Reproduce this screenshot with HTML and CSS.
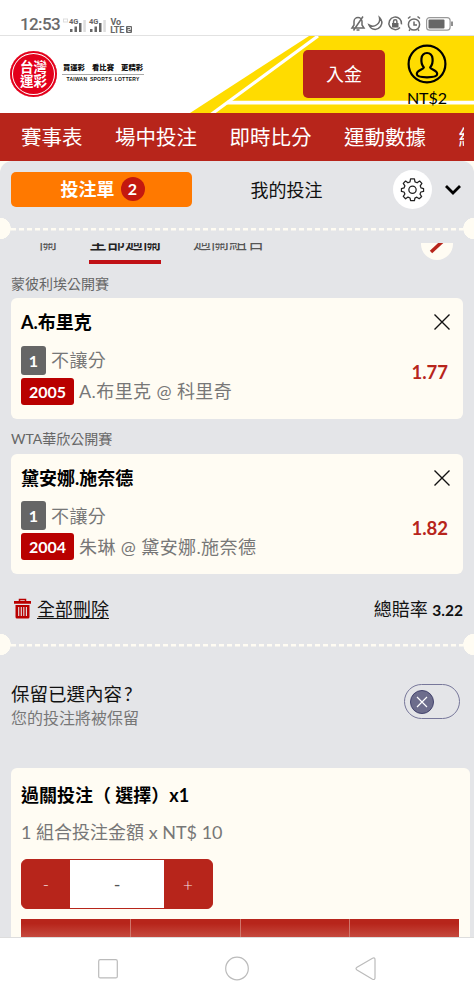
FILE: index.html
```html
<!DOCTYPE html>
<html lang="zh-Hant">
<head>
  <meta charset="UTF-8" />
  <meta name="viewport" content="width=device-width, initial-scale=1.0" />
  <title>台灣運彩 | 投注單</title>
  <link rel="stylesheet" href="styles.css">
</head>
<body>
  <div class="status-bar">
    <span class="clock">12:53</span>
    <svg class="signals" width="80" height="20" viewBox="0 0 80 20">
      <rect x="1.5" y="3" width="4" height="3" fill="none" stroke="#ddd"/>
      <g fill="#666">
        <text x="7" y="8" class="net">4G</text><rect x="8" y="13" width="2.5" height="3"/><rect x="12.5" y="10.5" width="2.5" height="5.5"/><rect x="17" y="7" width="2.5" height="9"/><rect x="21.3" y="4" width="2.5" height="12" fill="#ddd"/>
        <text x="27" y="8" class="net">4G</text><rect x="28" y="13" width="2.5" height="3"/><rect x="32.5" y="10.5" width="2.5" height="5.5"/><rect x="37" y="7" width="2.5" height="9"/><rect x="41.3" y="4" width="2.5" height="12" fill="#ddd"/>
        <text x="48.5" y="8.5" class="volte">Vo</text><text x="48.3" y="16.8" class="volte">LTE</text><rect x="64" y="10" width="6" height="7" rx="1"/><path d="M65.5 11.5h3v2h-2.500v2h2.500" fill="none" stroke="#fff" stroke-width=".8"/>
      </g>
    </svg>
    <svg class="status-icons" width="106" height="18" viewBox="0 0 106 18" fill="none" stroke="#6a6a6a" stroke-width="1.5">
      <path d="M2 13h12l-2-3V6.500a4 4 0 0 0-8 0V10zM6.500 15h3M3.500 15.500L13 1.500"/>
      <path d="M29.500 2.500a7 7 0 0 1-10.500 7.500c2 5 8 6 11.500 1.500 2-3 1.500-6.500-1-9z"/>
      <path d="M50 12.500a6.300 6.300 0 1 1 1.500-3.200"/><rect x="42" y="8" width="6.500" height="4.500" fill="#666" stroke="none"/><path d="M43.500 8V6.500a1.700 1.700 0 0 1 3.400 0V8"/>
      <circle cx="64" cy="9.500" r="5.600"/><path d="M64 6.500v3.500h3M58 3.500l2.500-2M70 3.500l-2.500-2M60 14.500l-1 1.200M68 14.500l1 1.200"/>
      <rect x="76.600" y="2.600" width="23.500" height="12.600" rx="3" stroke="#999" stroke-width="1.200"/><rect x="78.500" y="4.500" width="16" height="9" rx="1" fill="#666" stroke="none"/><path d="M102 6.500v4.500" stroke-width="1.500"/>
    </svg>
  </div>

  <header class="site-header">
    <svg class="header-bg" width="474" height="77" viewBox="0 0 474 77">
      <path d="M190 77L309 0H474V77z" fill="#ffdc00"/>
      <path d="M211 78.500L318 0" stroke="#fff" stroke-width="3.200"/>
      <path d="M227 66.700H474" stroke="#fff" stroke-width="3.800"/>
    </svg>
    <div class="brand">
      <div class="logo"><span>台灣</span><span>運彩</span></div>
      <div class="brand-text">
        <div class="slogan"><span>買運彩</span><span>看比賽</span><span>更精彩</span></div>
        <div class="brand-en">TAIWAN SPORTS LOTTERY</div>
      </div>
    </div>
    <a class="deposit" href="#">入金</a>
    <div class="account">
      <svg width="40" height="40" viewBox="0 0 40 40" fill="none" stroke="#000" stroke-width="2.200">
        <circle cx="20" cy="20" r="18.400"/>
        <path d="M16.800 23.500C13.300 19 13 9 20 9s6.700 10 3.200 14.500c0 2 7 2.500 7 6.500 0 2.500-5 3.300-10.200 3.300S9.800 32.500 9.800 30c0-4 7-4.500 7-6.500z"/>
      </svg>
      <span>NT$2</span>
    </div>
  </header>

  <nav class="main-nav">
    <div class="nav-scroll">
      <a>賽事表</a><a>場中投注</a><a>即時比分</a><a>運動數據</a><a>結果</a>
    </div>
  </nav>

  <main class="slip-wrap">
    <div class="slip">
      <div class="slip-tabs">
        <div class="tab-active">投注單 <span class="count">2</span></div>
        <div class="tab">我的投注</div>
        <div class="gear">
          <svg width="25" height="25" viewBox="0 0 26 26" fill="none" stroke="#222" stroke-width="1.300" stroke-linejoin="round">
            <path d="M11 2h4l.6 3.100 2.200.9 2.600-1.800 2.400 2.400L21 9.200l.9 2.200 2.600.600v3l-2.800.6-.9 2.200 1.700 2.500-2.500 2.300-2.500-1.600-2 .9L15 24.500h-4l-.6-2.700-2.100-.9-2.500 1.700-2.400-2.400 1.700-2.500-.9-2.100L1.500 15v-3l2.700-.6.900-2.200-1.700-2.600 2.400-2.400L8.300 6l2.100-.9z"/>
            <circle cx="13" cy="13.200" r="3.800"/>
          </svg>
        </div>
        <svg class="chevron" width="18" height="12" viewBox="0 0 18 12" fill="none" stroke="#000" stroke-width="2.800"><path d="M2 2l7 7 7-7"/></svg>
      </div>

      <div class="tear"></div>

      <div class="mode-tabs">
        <span class="mode">關</span>
        <span class="mode mode-on">全部過關</span>
        <span class="mode">過關組合</span>
        <div class="edit"><svg width="32" height="32" viewBox="0 0 32 32"><path d="M10 24L23 12" stroke="#b7251b" stroke-width="3.500"/></svg></div>
      </div>

      <div class="league">蒙彼利埃公開賽</div>
      <div class="bet-card">
        <div class="bet-main">
          <div class="bet-name">A.布里克</div>
          <div class="bet-line"><span class="pick">1</span>不讓分</div>
          <div class="bet-line"><span class="code">2005</span>A.布里克 @ 科里奇</div>
        </div>
        <div class="bet-side">
          <svg width="18" height="18" viewBox="0 0 18 18" stroke="#111" stroke-width="1.400"><path d="M1.500 1.500l15 15M16.500 1.500l-15 15"/></svg>
          <span class="odds">1.77</span>
        </div>
      </div>

      <div class="league league-next">WTA華欣公開賽</div>
      <div class="bet-card">
        <div class="bet-main">
          <div class="bet-name">黛安娜.施奈德</div>
          <div class="bet-line"><span class="pick">1</span>不讓分</div>
          <div class="bet-line"><span class="code">2004</span>朱琳 @ 黛安娜.施奈德</div>
        </div>
        <div class="bet-side">
          <svg width="18" height="18" viewBox="0 0 18 18" stroke="#111" stroke-width="1.400"><path d="M1.500 1.500l15 15M16.500 1.500l-15 15"/></svg>
          <span class="odds">1.82</span>
        </div>
      </div>

      <div class="summary">
        <svg width="17" height="21" viewBox="0 0 17 21">
          <path d="M5.500 3.500v-2h6v2" fill="none" stroke="#b90000" stroke-width="1.500"/>
          <path d="M0 3h17v2.800H0zM1.500 7h14v12a1.500 1.500 0 0 1-1.500 1.500h-11a1.500 1.500 0 0 1-1.500-1.500z" fill="#b90000"/>
          <path d="M4.700 9v9M7.300 9v9M9.800 9v9M12.400 9v9" stroke="#e4e5e8" stroke-width="1.100"/>
        </svg>
        <a class="delete-all">全部刪除</a>
        <div class="total">總賠率 <b>3.22</b></div>
      </div>

      <div class="tear"></div>

      <div class="keep">
        <div>
          <div class="keep-title">保留已選內容<span class="mark">?</span></div>
          <div class="keep-sub">您的投注將被保留</div>
        </div>
        <div class="toggle">
          <div class="knob"><svg width="12" height="12" viewBox="0 0 12 12" stroke="#fff" stroke-width="1.200"><path d="M1 1l10 10M11 1L1 11"/></svg></div>
        </div>
      </div>

      <div class="stake-card">
        <div class="stake-title">過關投注（ 選擇）x1</div>
        <div class="stake-sub">1 組合投注金額 x NT$ 10</div>
        <div class="stepper">
          <button>-</button><div class="amount">-</div><button>+</button>
        </div>
        <div class="keypad"><span></span><span></span><span></span><span></span></div>
      </div>
    </div>
  </main>

  <div class="system-nav">
    <svg width="474" height="62" viewBox="0 0 474 62" fill="none" stroke="#bbb" stroke-width="1.200">
      <rect x="98.700" y="21.700" width="18.600" height="18.200" rx="1.500"/>
      <circle cx="237" cy="30.500" r="11.300"/>
      <path d="M357 29.200l15.500-9q2.500-1 2.500 1.500v18q0 2.500-2.500 1.500L357 32q-2-1.400 0-2.800z"/>
    </svg>
  </div>
</body>
</html>
```
FILE: styles.css
```css
* { box-sizing: border-box; }
body { margin: 0; height: 1000px; overflow: hidden; display: flex; flex-direction: column; background: #fff; color: #111; font-family: Lato, "Noto Sans CJK TC", sans-serif; font-size: 18px; }
svg { display: block; flex: none; }

.status-bar { height: 36px; flex: none; display: flex; align-items: flex-start; padding: 14px 18px 0 20px; border-bottom: 1px solid #e2e2e2; color: #6a6a6a; }
.clock { font: 500 17px/21px Roboto, sans-serif; width: 41px; letter-spacing: -0.6px; }
.signals { margin: 2px 0 0 1px; }
.net { font: bold 7.5px Roboto, sans-serif; }
.volte { font: bold 9px Roboto, sans-serif; letter-spacing: -0.3px; }
.status-icons { margin: 1px 0 0 auto; }

.site-header { position: relative; height: 77px; flex: none; display: flex; align-items: flex-start; padding: 0 27px 0 10px; }
.header-bg { position: absolute; left: 0; top: 0; }
.brand { position: relative; display: flex; gap: 5px; padding-top: 15px; }
.logo { width: 47px; height: 46px; border-radius: 50%; background: #e3001b; box-shadow: inset 0 0 0 2px #e3001b, inset 0 0 0 3px #fff; color: #fff; display: flex; flex-direction: column; align-items: center; justify-content: center; font-size: 13.5px; line-height: 14px; font-weight: 700; }
.brand-text { width: 82px; padding-top: 11px; }
.slogan { display: flex; justify-content: space-between; padding: 0 1px; font-size: 7.3px; line-height: 11px; font-weight: 900; height: 13px; border-bottom: 1px solid #aaa; white-space: nowrap; }
.brand-en { font: bold 5px/9px "Liberation Sans", sans-serif; letter-spacing: 0.25px; word-spacing: 1px; text-align: center; white-space: nowrap; }
.deposit { position: relative; width: 82px; height: 48px; margin: 14px 0 0 auto; border-radius: 5px; background: #b7251b; color: #fff; text-align: center; line-height: 48px; text-decoration: none; }
.account { position: relative; width: 40px; margin: 8px 0 0 22px; font-size: 16px; line-height: 20px; display: flex; flex-direction: column; align-items: center; gap: 4px; color: #000; }

.main-nav { height: 48px; flex: none; background: #b7251b; padding: 0 10px 0 21px; }
.nav-scroll { display: flex; gap: 32.5px; overflow: hidden; height: 48px; color: #fff; font-size: 20.5px; line-height: 49px; white-space: nowrap; }
.nav-scroll a { flex: none; }

.slip-wrap { flex: 1; min-height: 0; overflow: hidden; background: #fffcf3; }
.slip { background: #e4e5e8; border-radius: 12px 12px 0 0; height: 800px; }
.slip-tabs { display: flex; align-items: center; height: 57px; padding: 0 12px 0 11px; }
.tab-active { width: 181px; height: 35px; border-radius: 5px; background: #ff7900; color: #fff; font-weight: 700; display: flex; align-items: center; justify-content: center; gap: 6px; padding-left: 2px; line-height: 33px; padding-bottom: 1px; }
.count { width: 24px; height: 24px; border-radius: 50%; background: #c3190f; font-size: 16px; line-height: 24px; text-align: center; }
.tab { width: 189px; text-align: center; padding-bottom: 2px; }
.gear { width: 39px; height: 39px; margin-left: 12px; border-radius: 50%; background: #fff; display: flex; align-items: center; justify-content: center; }
.chevron { margin-left: auto; }

/* perforated ticket edge */
.tear { height: 21px; background:
  radial-gradient(circle at 0 50%, #fffcf3 10.500px, transparent 11px),
  radial-gradient(circle at 100% 50%, #fffcf3 10.500px, transparent 11px),
  repeating-linear-gradient(90deg, #fffcf3 0 5.500px, transparent 5.500px 8px) 11px 10px / 452px 2.500px no-repeat; }

.mode-tabs { display: flex; align-items: flex-end; height: 27px; margin-top: 4px; overflow: hidden; padding-left: 39px; color: #555; }
.mode { height: 40px; line-height: 26px; margin-right: 32px; border-bottom: 4px solid transparent; flex: none; margin-bottom: 6px; padding-top: 5px; }
.mode-on { color: #222; font-weight: 500; border-color: #c01015; }
.edit { width: 32px; height: 32px; margin: 0 21px 10px auto; border-radius: 50%; background: #fffcf3; }

.league { height: 28px; line-height: 28px; padding-left: 11px; font-size: 14px; color: #666; }
.league-next { height: 35px; line-height: 40px; }
.bet-card { display: flex; justify-content: space-between; height: 120.5px; margin: 0 11px; padding: 11px 12px 0 10px; border-radius: 6px; background: #fffcf3; }
.bet-name { font-weight: 700; line-height: 26px; height: 34.5px; color: #000; }
.bet-line { display: flex; align-items: center; height: 31px; color: #777; letter-spacing: 0.4px; white-space: nowrap; }
.pick, .code { color: #fff; font-weight: 700; font-size: 16px; border-radius: 3px; text-align: center; letter-spacing: 0; margin: 2px 5px 0 0; }
.pick { width: 25px; height: 29px; line-height: 30px; background: #666; }
.code { width: 53px; height: 27px; line-height: 27px; background: #b90000; }
.bet-side { display: flex; flex-direction: column; align-items: flex-end; padding-top: 4px; }
.odds { margin: 28px 3px 0 0; font-size: 18.5px; line-height: 26px; font-weight: 700; color: #b7251b; }

.summary { display: flex; align-items: center; height: 60px; padding: 8px 11px 0 14px; }
.delete-all { margin-left: 6px; text-decoration: underline; text-underline-offset: 2px; }
.total { margin-left: auto; }
.total b { font-size: 15.5px; }

.keep { display: flex; justify-content: space-between; padding: 26px 14px 0 11px; height: 113px; }
.keep-title { font-size: 18.5px; line-height: 25px; }
.mark { margin-left: 2px; font-size: 19px; }
.keep-sub { font-size: 16px; line-height: 21px; color: #777; }
.toggle { width: 56px; height: 35px; margin-top: 3px; border: 1px solid #77779a; border-radius: 18px; padding: 5px; }
.knob { width: 24px; height: 24px; border-radius: 50%; border: 1.5px solid #44446e; background: #6d6d8c; display: flex; align-items: center; justify-content: center; }

.stake-card { width: 459px; height: 180px; margin-left: 11px; padding: 14px 11px 0 10px; border-radius: 6px 6px 0 0; background: #fffcf3; }
.stake-title { font-weight: 700; line-height: 26px; color: #000; }
.stake-sub { line-height: 26px; margin-top: 11px; color: #777; }
.stepper { display: flex; width: 192px; height: 50px; margin-top: 14px; border: 1px solid #b7251b; border-radius: 6px; background: #b7251b; overflow: hidden; }
.stepper button { width: 48px; border: 0; padding: 0; background: #b7251b; color: #f6e4e2; font: 300 17px Lato, sans-serif; }
.amount { flex: 1; background: #fff; text-align: center; line-height: 48px; color: #555; }
.keypad { display: grid; grid-template-columns: repeat(4, 1fr); gap: 1px; margin-top: 10px; height: 18px; background: #cf766b; }
.keypad span { background: linear-gradient(#b7251b 25%, #c5493e); }

.system-nav { height: 63px; flex: none; border-top: 1px solid #ddd; background: #fff; }
```
